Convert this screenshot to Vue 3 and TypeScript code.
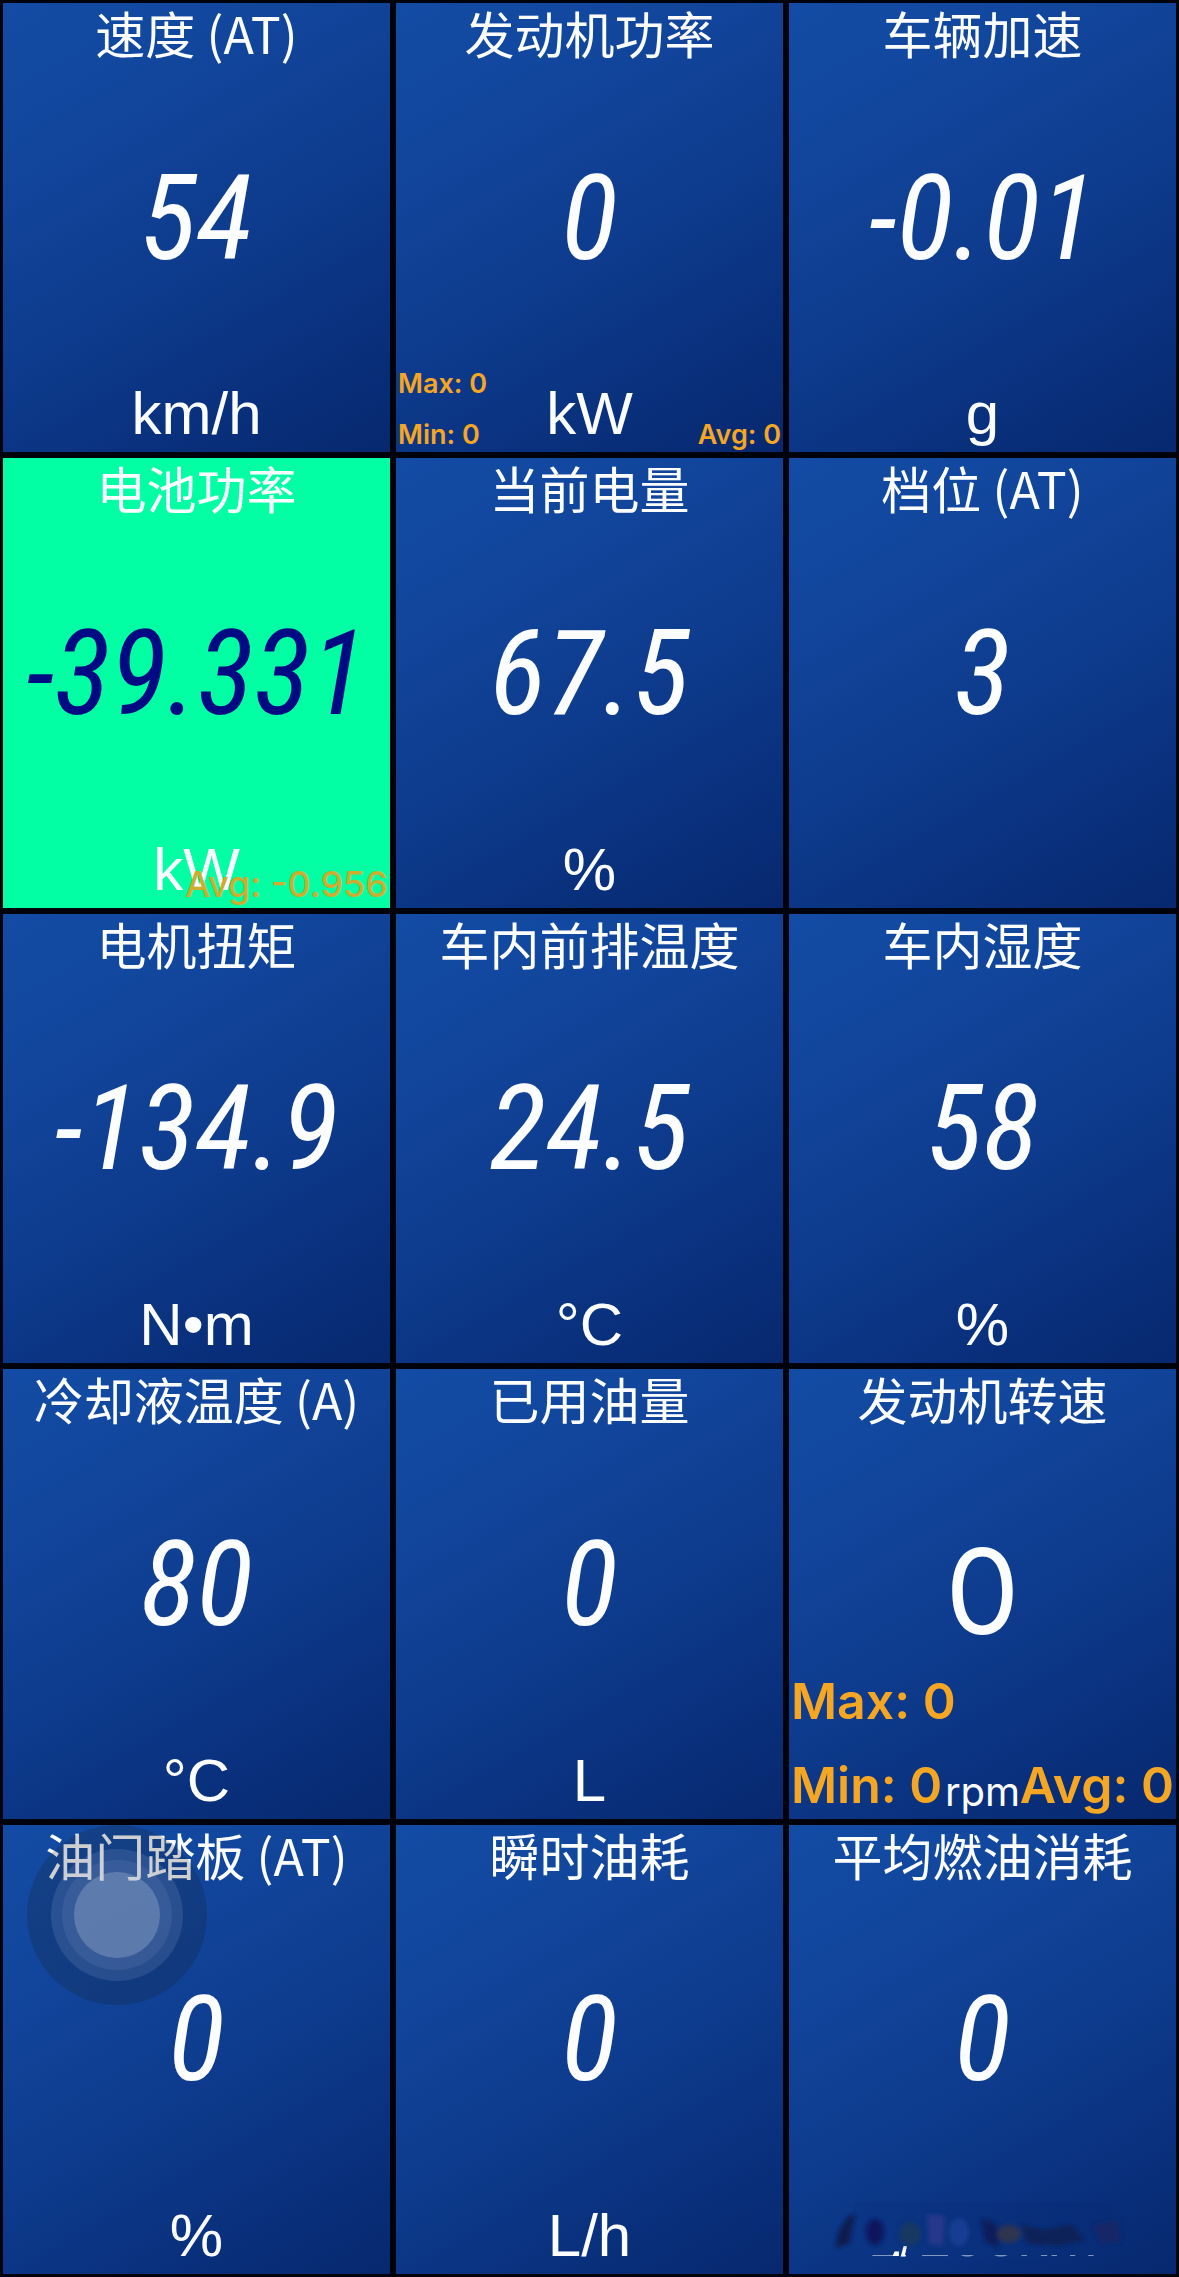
<script setup lang="ts">
interface Stat {
  label: string
  value: string
  place: 'max' | 'min' | 'avg'
}

interface Gauge {
  title: string
  value: string
  unit: string
  stats?: Stat[]
  statSize?: 'small' | 'medium' | 'large'
  alert?: boolean
  plain?: boolean
  touch?: boolean
  smudged?: boolean
}

const zeroStats: Stat[] = [
  { label: 'Max', value: '0', place: 'max' },
  { label: 'Min', value: '0', place: 'min' },
  { label: 'Avg', value: '0', place: 'avg' },
]

const gauges: Gauge[] = [
  { title: '速度 (AT)', value: '54', unit: 'km/h' },
  { title: '发动机功率', value: '0', unit: 'kW', stats: zeroStats, statSize: 'small' },
  { title: '车辆加速', value: '-0.01', unit: 'g' },
  {
    title: '电池功率',
    value: '-39.331',
    unit: 'kW',
    alert: true,
    stats: [{ label: 'Avg', value: '-0.956', place: 'avg' }],
    statSize: 'medium',
  },
  { title: '当前电量', value: '67.5', unit: '%' },
  { title: '档位 (AT)', value: '3', unit: '' },
  { title: '电机扭矩', value: '-134.9', unit: 'N•m' },
  { title: '车内前排温度', value: '24.5', unit: '°C' },
  { title: '车内湿度', value: '58', unit: '%' },
  { title: '冷却液温度 (A)', value: '80', unit: '°C' },
  { title: '已用油量', value: '0', unit: 'L' },
  { title: '发动机转速', value: '0', unit: 'rpm', plain: true, stats: zeroStats, statSize: 'large' },
  { title: '油门踏板 (AT)', value: '0', unit: '%', touch: true },
  { title: '瞬时油耗', value: '0', unit: 'L/h' },
  { title: '平均燃油消耗', value: '0', unit: 'L/100km', smudged: true },
]
</script>

<template>
  <main class="board">
    <article
      v-for="gauge in gauges"
      :key="gauge.title"
      class="gauge"
      :class="{ alert: gauge.alert, plain: gauge.plain }"
    >
      <h2 class="title">{{ gauge.title }}</h2>
      <p class="value">{{ gauge.value }}</p>
      <p class="unit">{{ gauge.unit }}</p>

      <div v-if="gauge.stats" class="stats" :class="gauge.statSize">
        <span v-for="stat in gauge.stats" :key="stat.label" :class="stat.place">
          {{ stat.label }}: {{ stat.value }}
        </span>
      </div>

      <button v-if="gauge.touch" class="touch" type="button" aria-label="AssistiveTouch">
        <span class="ring"><span class="ring inner"><span class="dot"></span></span></span>
      </button>

      <svg v-if="gauge.smudged" class="smudge" viewBox="0 0 330 60" aria-hidden="true">
        <defs>
          <filter id="soft" x="-20%" y="-20%" width="140%" height="140%">
            <feGaussianBlur stdDeviation="2" />
          </filter>
          <linearGradient id="cover" x1="0" x2="1">
            <stop offset="0" stop-color="#0b3585" />
            <stop offset="1" stop-color="#082c76" />
          </linearGradient>
        </defs>
        <path d="M40 0H300V53H92L94 44H84L80 53H40Z" fill="url(#cover)" />
        <path d="M40 53H80V58H40ZM94 53H300V58H94Z" fill="url(#cover)" opacity="0.5" />
        <g filter="url(#soft)">
          <path d="M22 46L26 28L36 14L42 12L36 42Z" fill="#0a1c50" />
          <ellipse cx="62" cy="30" rx="9" ry="13" fill="#09185c" />
          <ellipse cx="97" cy="32" rx="11" ry="12" fill="#123863" />
          <path d="M114 12L132 14L130 44L116 42Z" fill="#26378a" />
          <ellipse cx="146" cy="30" rx="10" ry="14" fill="#133c92" />
          <path d="M168 16L184 22L186 46L172 40Z" fill="#0c1f5c" />
          <ellipse cx="196" cy="32" rx="12" ry="9" fill="#2d3450" />
          <path d="M208 22L232 28L258 22L272 38L246 44L214 42Z" fill="#112059" />
          <path d="M280 24L304 18L308 40L288 42Z" fill="#152766" />
        </g>
      </svg>
    </article>
  </main>
</template>

<style>
body {
  margin: 0;
  background: #00020c;
}
</style>

<style scoped>
.board {
  box-sizing: border-box;
  display: grid;
  grid-template-columns: repeat(3, 1fr);
  grid-auto-rows: 1fr;
  gap: 6px;
  min-height: 100vh;
  padding: 3px;
  background: #00020c;
  color: #fbfdff;
  font-family: Inter, "Noto Sans CJK SC", sans-serif;
}

.gauge {
  position: relative;
  display: flex;
  flex-direction: column;
  min-width: 0;
  text-align: center;
  white-space: nowrap;
  background: linear-gradient(150deg, #134ca5 0%, #11459b 28%, #0d398a 60%, #09307c 80%, #07286f 100%);
}

.gauge.alert {
  background: #02ffa3;
}

.title {
  margin: 0;
  font: 400 50px/58px "Noto Sans CJK SC", sans-serif;
}

.value {
  display: flex;
  flex: 1;
  align-items: center;
  justify-content: center;
  margin: 0;
  font: italic 400 118px/140px "Roboto Condensed", "DejaVu Sans Condensed", sans-serif;
}

.alert .value {
  color: #000a82;
}

.plain .value {
  padding-top: 12px;
  font: 400 118px/140px Inter, sans-serif;
}

.unit {
  height: 76px;
  margin: 0;
  font: 400 60px/76px "Liberation Sans", sans-serif;
}

.plain .unit {
  box-sizing: border-box;
  padding-top: 22px;
  font: 400 40px/54px Inter, sans-serif;
}

.stats {
  position: absolute;
  inset: auto 2px 0 2px;
  display: grid;
  grid-template: "max ." "min avg" / auto auto;
  justify-content: space-between;
  color: #f5a623;
  text-align: left;
}

.max {
  grid-area: max;
}

.min {
  grid-area: min;
}

.avg {
  grid-area: avg;
}

.small {
  font-size: 27px;
  font-weight: 600;
  line-height: 51px;
  bottom: -8px;
}

.medium {
  font-size: 36px;
  font-weight: 500;
  line-height: 48px;
  justify-content: end;
  color: #d0ac2e;
}

.large {
  font-size: 50px;
  font-weight: 600;
  line-height: 84px;
  bottom: -8px;
}

.touch {
  position: absolute;
  top: 0;
  left: 24px;
  display: grid;
  place-items: center;
  width: 180px;
  height: 180px;
  padding: 0;
  border: 0;
  border-radius: 50%;
  background: rgba(24, 24, 24, 0.2);
}

.ring {
  display: grid;
  place-items: center;
  width: 132px;
  height: 132px;
  border-radius: 50%;
  background: rgba(200, 210, 240, 0.13);
}

.ring.inner {
  width: 110px;
  height: 110px;
  background: rgba(200, 210, 240, 0.09);
}

.dot {
  width: 86px;
  height: 86px;
  border-radius: 50%;
  background: rgba(200, 215, 230, 0.26);
}

.smudge {
  position: absolute;
  bottom: 12px;
  left: 24px;
  width: 330px;
  height: 60px;
}
</style>
